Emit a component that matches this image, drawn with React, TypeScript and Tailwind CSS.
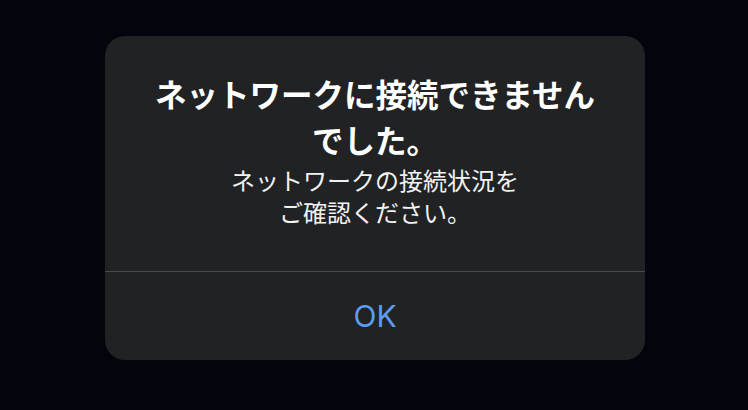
export default function App() {
  return (
    <div className="w-[748px] h-[410px] bg-[#03050c] flex pl-[105px] pt-[36px]">
      <div
        className="w-[540px] h-[324px] bg-[#212224] rounded-[20px] flex flex-col text-white"
        style={{ fontFamily: '"Noto Sans CJK JP", "Noto Sans", sans-serif' }}
      >
        <div className="flex flex-col items-center text-center px-[30px] pt-[34px] pb-[43px]">
          <h2 className="text-[31.5px] leading-[46px] font-bold">
            ネットワークに接続できません
            <br />
            でした。
          </h2>
          <p className="mt-[2px] text-[24px] leading-[32px] font-normal text-[#f2f2f2]">
            ネットワークの接続状況を
            <br />
            ご確認ください。
          </p>
        </div>
        <div className="h-px bg-[#4a4a4c]" />
        <button
          className="flex-1 flex items-center justify-center text-[30px] text-[#5b9cf5]"
          style={{ fontFamily: '"Inter", "Noto Sans", sans-serif' }}
        >
          OK
        </button>
      </div>
    </div>
  );
}
